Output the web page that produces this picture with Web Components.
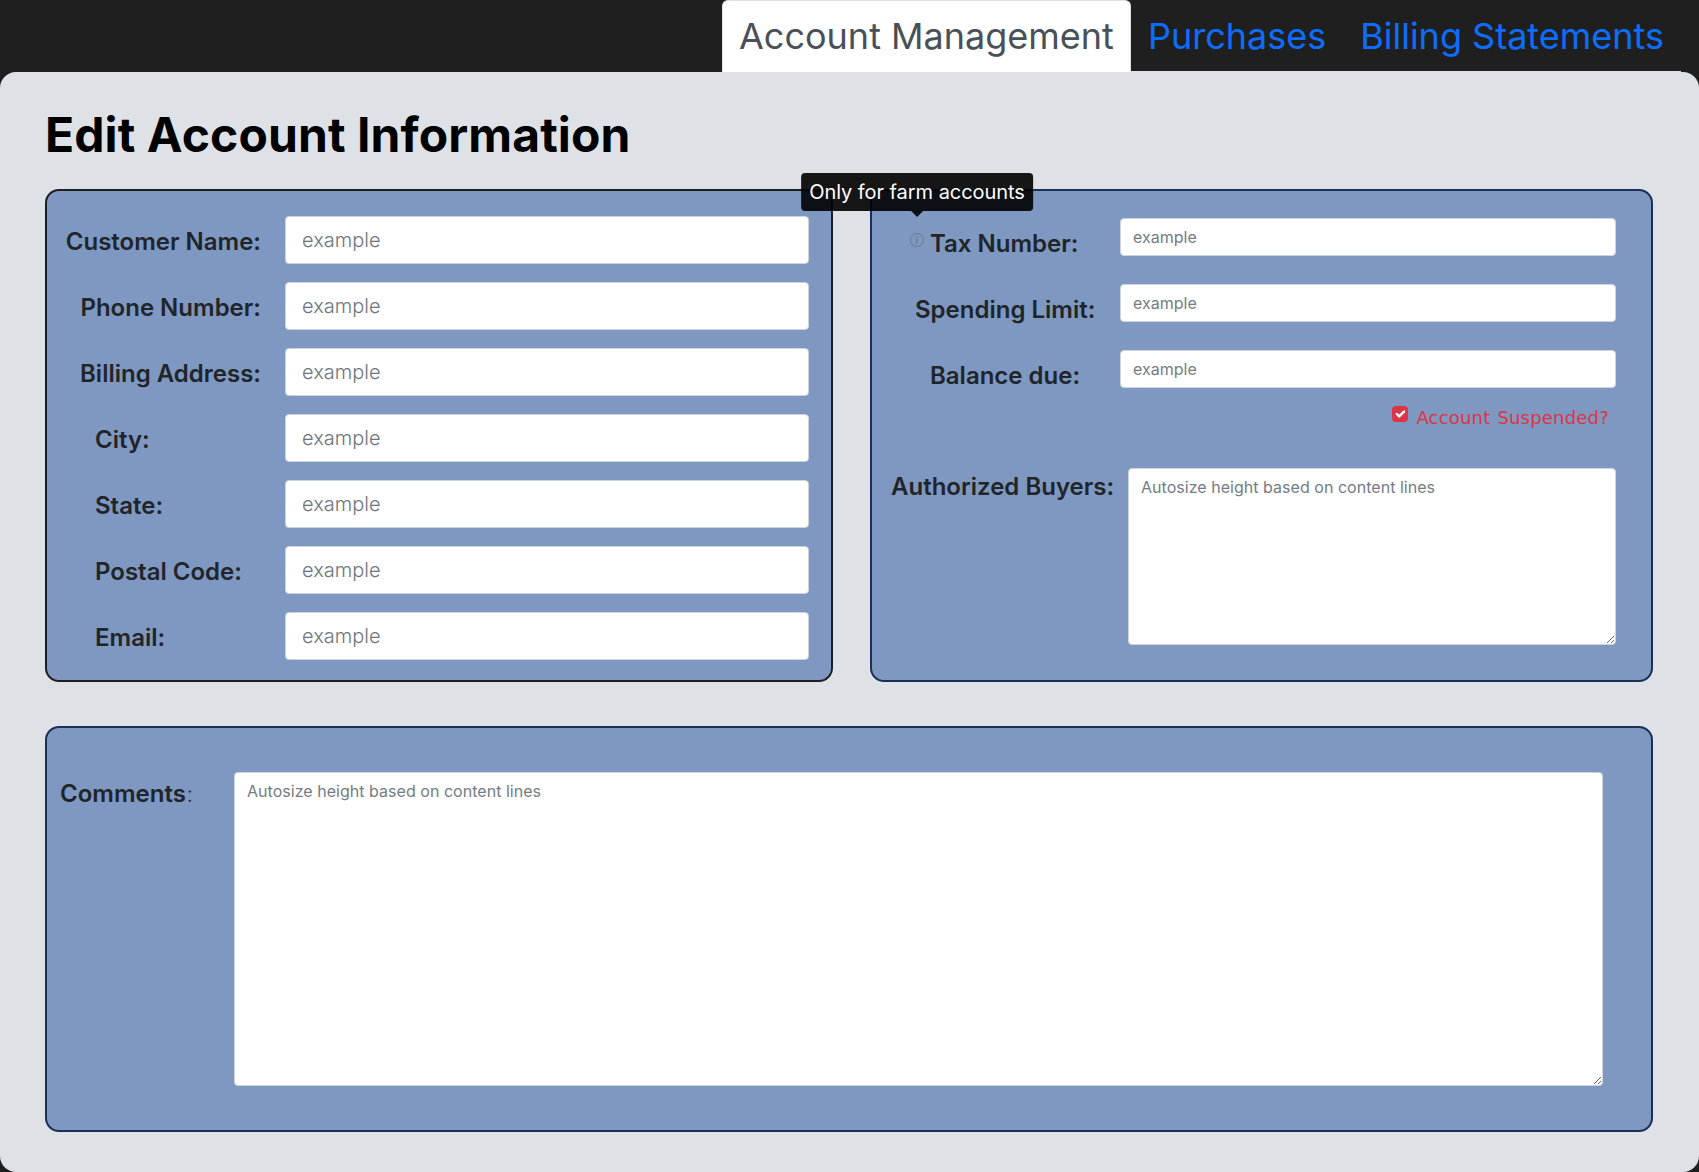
<!DOCTYPE html>
<html lang="en">
<head>
<meta charset="utf-8">
<title>Edit Account Information</title>
<style>
  html, body { margin: 0; height: 100%; }
  body { background: #1f1f1f; font-family: Inter, "Liberation Sans", sans-serif; color: #212529; }
  .colon { font-weight: 300; font-size: 22px; margin-left: 1px; }
</style>
</head>
<body>
<template id="text-field-tpl">
  <style>
    :host { display: block; min-width: 0; }
    input, textarea {
      display: block;
      width: 100%;
      box-sizing: border-box;
      margin: 0;
      background: #fff;
      color: #212529;
      border: 1px solid #ced4da;
      border-radius: 4px;
      font-family: inherit;
      outline: none;
    }
    input::placeholder, textarea::placeholder { color: #747c84; opacity: 1; }
    input { height: 38px; padding: 0 12px; font-size: 16px; font-weight: 400; }
    :host([size="lg"]) input { height: 48px; padding: 0 16px; font-size: 20px; font-weight: 300; }
    :host([size="lg"]) input::placeholder { color: #6c757d; }
    textarea { padding: 6px 12px; font-size: 16px; font-weight: 400; letter-spacing: 0.03px; line-height: 24px; height: var(--area-h, 177px); resize: vertical; }
  </style>
</template>

<script>
class AccountTabs extends HTMLElement {
  constructor() {
    super();
    const sr = this.attachShadow({ mode: "open" });
    sr.innerHTML = `
      <style>
        :host { display: flex; justify-content: flex-end; height: 72px; padding-right: 18px; box-sizing: border-box; }
        .tabs { display: flex; height: 72px; box-sizing: border-box; border-bottom: 1px solid #dee2e6; }
      </style>
      <div class="tabs"><slot></slot></div>
    `;
  }
}
customElements.define("account-tabs", AccountTabs);

class TabLink extends HTMLElement {
  constructor() {
    super();
    const sr = this.attachShadow({ mode: "open" });
    sr.innerHTML = `
      <style>
        :host {
          display: block;
          height: 72px;
          box-sizing: border-box;
          padding: 0 16px;
          border: 1px solid transparent;
          border-radius: 6px 6px 0 0;
          font-size: 36px;
          font-weight: 400;
          line-height: 70px;
          color: #0d6efd;
          white-space: nowrap;
        }
        :host([active]) { background: #fff; color: #495057; border-color: #dee2e6 #dee2e6 #fff; }
      </style>
      <slot></slot>
    `;
  }
}
customElements.define("tab-link", TabLink);

class EditPanel extends HTMLElement {
  constructor() {
    super();
    const sr = this.attachShadow({ mode: "open" });
    sr.innerHTML = `
      <style>
        :host {
          display: block;
          height: 1100px;
          box-sizing: border-box;
          padding: 0 46px 0 45px;
          background: #dee2e6;
          border-radius: 16px;
        }
        h1 {
          margin: 0;
          padding: 33px 0 0;
          height: 117px;
          box-sizing: border-box;
          font-size: 48px;
          line-height: 60px;
          font-weight: 700;
          letter-spacing: 0.1px;
          color: #000;
        }
        .top { display: grid; grid-template-columns: 788px 783px; column-gap: 37px; }
        .bottom { margin-top: 44px; }
      </style>
      <h1><slot name="title"></slot></h1>
      <div class="top"><slot name="top"></slot></div>
      <div class="bottom"><slot name="bottom"></slot></div>
    `;
  }
}
customElements.define("edit-panel", EditPanel);

class FormCard extends HTMLElement {
  constructor() {
    super();
    const sr = this.attachShadow({ mode: "open" });
    sr.innerHTML = `
      <style>
        :host {
          display: block;
          box-sizing: border-box;
          background: #7e98c2;
          border: 2px solid #1a3058;
          border-radius: 14px;
        }
        :host([dark]) { border-color: #1d1f24; }
      </style>
      <slot></slot>
    `;
  }
}
customElements.define("form-card", FormCard);

class TextField extends HTMLElement {
  static get observedAttributes() { return ["placeholder", "kind", "size"]; }

  constructor() {
    super();
    const sr = this.attachShadow({ mode: "open" });
    sr.appendChild(document.getElementById("text-field-tpl").content.cloneNode(true));
    this._ctl = null;
  }

  connectedCallback() { this._render(); }
  attributeChangedCallback() { this._render(); }

  _render() {
    const tag = this.getAttribute("kind") === "area" ? "textarea" : "input";
    if (!this._ctl || this._ctl.localName !== tag) {
      if (this._ctl) this._ctl.remove();
      this._ctl = document.createElement(tag);
      this.shadowRoot.appendChild(this._ctl);
    }
    this._ctl.placeholder = this.getAttribute("placeholder") || "";
  }
}
customElements.define("text-field", TextField);

class FieldRow extends HTMLElement {
  static get observedAttributes() { return ["label", "placeholder", "size", "label-width", "indent", "align", "gap", "kind", "label-top"]; }

  constructor() {
    super();
    const sr = this.attachShadow({ mode: "open" });
    sr.innerHTML = `
      <style>
        :host { display: grid; grid-template-columns: var(--lw, 240px) minmax(0, 1fr); align-items: start; }
        .label {
          box-sizing: border-box;
          font-size: 24px;
          font-weight: 600;
          line-height: 32px;
          color: #212529;
          white-space: nowrap;
        }
      </style>
      <div class="label"><slot name="before"></slot><span class="text"></span><slot name="after"></slot></div>
      <text-field></text-field>
    `;
    this.$label = sr.querySelector(".label");
    this.$text = sr.querySelector(".text");
    this.$field = sr.querySelector("text-field");
  }

  connectedCallback() { this._apply(); }
  attributeChangedCallback() { this._apply(); }

  _apply() {
    this.$text.textContent = this.getAttribute("label") || "";
    this.style.setProperty("--lw", (this.getAttribute("label-width") || 240) + "px");
    this.$label.style.paddingLeft = (this.getAttribute("indent") || 0) + "px";
    this.$label.style.paddingTop = (this.getAttribute("label-top") || 0) + "px";
    this.$label.style.paddingRight = (this.getAttribute("gap") || 0) + "px";
    this.$label.style.textAlign = this.getAttribute("align") || "left";
    for (const a of ["placeholder", "size", "kind"]) {
      if (this.hasAttribute(a)) this.$field.setAttribute(a, this.getAttribute(a));
    }
  }
}
customElements.define("field-row", FieldRow);

class InfoTip extends HTMLElement {
  constructor() {
    super();
    const sr = this.attachShadow({ mode: "open" });
    sr.innerHTML = `
      <style>
        :host { display: inline-block; position: relative; width: 14px; height: 14px; margin-right: 6px; vertical-align: 5px; line-height: 0; }
        svg { display: block; }
        .tip {
          position: absolute;
          left: 50%;
          bottom: 36px;
          transform: translateX(-50%);
          box-sizing: border-box;
          height: 38px;
          padding: 0 8px;
          background: rgba(0, 0, 0, 0.9);
          color: #fff;
          border-radius: 4px;
          font-size: 20px;
          font-weight: 400;
          letter-spacing: -0.05px;
          line-height: 39px;
          white-space: nowrap;
        }
        .tip::after {
          content: "";
          position: absolute;
          left: 50%;
          top: 100%;
          margin-left: -6px;
          border: 6px solid transparent;
          border-bottom-width: 0;
          border-top-color: rgba(0, 0, 0, 0.9);
        }
      </style>
      <svg width="14" height="14" viewBox="0 0 16 16" fill="#6c7a8f">
        <path d="M8 15A7 7 0 1 1 8 1a7 7 0 0 1 0 14zm0 1A8 8 0 1 0 8 0a8 8 0 0 0 0 16z"/>
        <path d="m8.93 6.588-2.29.287-.082.38.45.083c.294.07.352.176.288.469l-.738 3.468c-.194.897.105 1.319.808 1.319.545 0 1.178-.252 1.465-.598l.088-.416c-.2.176-.492.246-.686.246-.275 0-.375-.193-.304-.533L8.93 6.588zM9 4.5a1 1 0 1 1-2 0 1 1 0 0 1 2 0z"/>
      </svg>
      <div class="tip"><slot></slot></div>
    `;
  }
}
customElements.define("info-tip", InfoTip);

class SuspendCheck extends HTMLElement {
  constructor() {
    super();
    const sr = this.attachShadow({ mode: "open" });
    sr.innerHTML = `
      <style>
        :host { display: flex; justify-content: flex-end; align-items: flex-start; gap: 8px; margin: 14px 7px 0 0; color: #dc3545; }
        .box { width: 16px; height: 16px; border-radius: 4px; background: #dc3545; flex: none; }
        svg { display: block; }
        .txt { font-family: "DejaVu Sans", "Noto Sans", sans-serif; font-size: 18px; line-height: 23px; letter-spacing: 0.2px; word-spacing: 1px; }
      </style>
      <div class="box">
        <svg width="16" height="16" viewBox="0 0 20 20"><path fill="none" stroke="#fff" stroke-linecap="round" stroke-linejoin="round" stroke-width="3" d="m6 10 3 3 6-6"/></svg>
      </div>
      <div class="txt"><slot></slot></div>
    `;
  }
}
customElements.define("suspend-check", SuspendCheck);

class StackBox extends HTMLElement {
  constructor() {
    super();
    const sr = this.attachShadow({ mode: "open" });
    sr.innerHTML = `
      <style>
        :host { display: flex; flex-direction: column; box-sizing: border-box; }
      </style>
      <slot></slot>
    `;
  }
  connectedCallback() {
    this.style.padding = this.getAttribute("pad") || "0";
    this.style.gap = (this.getAttribute("gap") || 0) + "px";
  }
}
customElements.define("stack-box", StackBox);
</script>

<account-tabs>
  <tab-link active>Account Management</tab-link>
  <tab-link>Purchases</tab-link>
  <tab-link>Billing Statements</tab-link>
</account-tabs>

<edit-panel>
  <span slot="title">Edit Account Information</span>

  <form-card slot="top" dark>
    <stack-box pad="25px 22px 20px 0" gap="24">
      <field-row label="Customer Name:" label-width="238" align="right" gap="24" label-top="10" size="lg" placeholder="example"></field-row>
      <field-row style="margin-top:-6px" label="Phone Number:" label-width="238" align="right" gap="24" label-top="10" size="lg" placeholder="example"></field-row>
      <field-row style="margin-top:-6px" label="Billing Address:" label-width="238" align="right" gap="24" label-top="10" size="lg" placeholder="example"></field-row>
      <field-row style="margin-top:-6px" label="City:" label-width="238" indent="48" label-top="10" size="lg" placeholder="example"></field-row>
      <field-row style="margin-top:-6px" label="State:" label-width="238" indent="48" label-top="10" size="lg" placeholder="example"></field-row>
      <field-row style="margin-top:-6px" label="Postal Code:" label-width="238" indent="48" label-top="10" size="lg" placeholder="example"></field-row>
      <field-row style="margin-top:-6px" label="Email:" label-width="238" indent="48" label-top="10" size="lg" placeholder="example"></field-row>
    </stack-box>
  </form-card>

  <form-card slot="top">
    <stack-box pad="27px 35px 34px 0">
      <stack-box gap="24">
        <field-row label="Tax Number:" label-width="248" indent="38" label-top="10" placeholder="example">
          <info-tip slot="before">Only for farm accounts</info-tip>
        </field-row>
        <field-row label="Spending Limit:" label-width="248" indent="43" label-top="10" placeholder="example"></field-row>
        <field-row label="Balance due:" label-width="248" indent="58" label-top="10" placeholder="example"></field-row>
      </stack-box>
      <suspend-check>Account Suspended?</suspend-check>
      <field-row style="margin-top:39px" label="Authorized Buyers:" label-width="256" indent="19" label-top="3" kind="area" placeholder="Autosize height based on content lines"></field-row>
    </stack-box>
  </form-card>

  <form-card slot="bottom">
    <stack-box pad="44px 48px 44px 0">
      <field-row style="--area-h:314px" label="Comments" label-width="187" indent="13" label-top="6" kind="area" placeholder="Autosize height based on content lines">
        <span slot="after" class="colon">:</span>
      </field-row>
    </stack-box>
  </form-card>
</edit-panel>
</body>
</html>
